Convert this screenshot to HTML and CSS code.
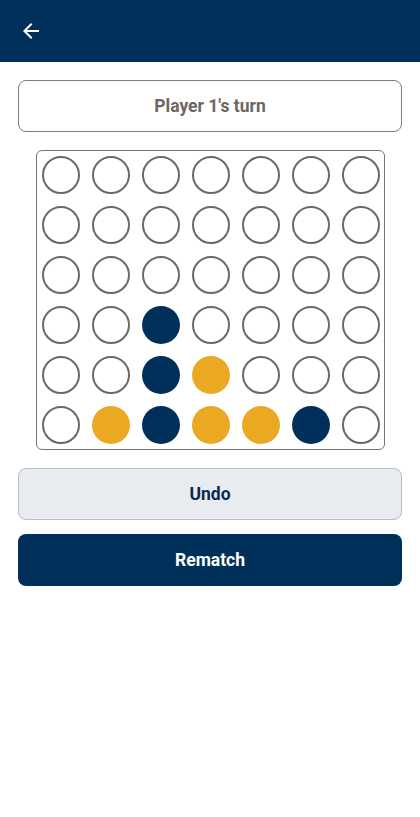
FILE: index.html
```html
<!DOCTYPE html>
<html lang="en">
<head>
<meta charset="UTF-8">
<meta name="viewport" content="width=device-width, initial-scale=1.0">
<title>Connect Four</title>
<link rel="stylesheet" href="styles.css">
</head>
<body>
    <header class="topbar">
        <button class="back" aria-label="Back">
            <svg width="24" height="24" viewBox="0 0 24 24"><path d="M20 11H7.83l5.59-5.59L12 4l-8 8 8 8 1.41-1.41L7.83 13H20v-2z" fill="#fff"/></svg>
        </button>
    </header>

    <main class="game">
        <div class="status">Player 1's turn</div>

        <div class="board">
            <!-- row 1 -->
            <span class="cell"></span><span class="cell"></span><span class="cell"></span><span class="cell"></span><span class="cell"></span><span class="cell"></span><span class="cell"></span>
            <!-- row 2 -->
            <span class="cell"></span><span class="cell"></span><span class="cell"></span><span class="cell"></span><span class="cell"></span><span class="cell"></span><span class="cell"></span>
            <!-- row 3 -->
            <span class="cell"></span><span class="cell"></span><span class="cell"></span><span class="cell"></span><span class="cell"></span><span class="cell"></span><span class="cell"></span>
            <!-- row 4 -->
            <span class="cell"></span><span class="cell"></span><span class="cell p2"></span><span class="cell"></span><span class="cell"></span><span class="cell"></span><span class="cell"></span>
            <!-- row 5 -->
            <span class="cell"></span><span class="cell"></span><span class="cell p2"></span><span class="cell p1"></span><span class="cell"></span><span class="cell"></span><span class="cell"></span>
            <!-- row 6 -->
            <span class="cell"></span><span class="cell p1"></span><span class="cell p2"></span><span class="cell p1"></span><span class="cell p1"></span><span class="cell p2"></span><span class="cell"></span>
        </div>

        <button class="btn undo">Undo</button>
        <button class="btn rematch">Rematch</button>
    </main>
</body>
</html>
```

FILE: styles.css
```css
* {
    margin: 0;
    padding: 0;
    box-sizing: border-box;
    font-family: 'Roboto', sans-serif;
}

body {
    background-color: #ffffff;
}

.topbar {
    height: 62px;
    background-color: #00305a;
    display: flex;
    align-items: center;
    padding-left: 19px;
}

.back {
    background: none;
    border: none;
    display: flex;
    cursor: pointer;
}

.game {
    padding: 18px 18px 0 18px;
    display: flex;
    flex-direction: column;
    align-items: center;
}

.status {
    width: 100%;
    height: 52px;
    border: 1px solid #837b77;
    border-radius: 8px;
    display: flex;
    align-items: center;
    justify-content: center;
    font-size: 17.5px;
    font-weight: 700;
    color: #6e6661;
}

/* the board */
.board {
    margin-top: 18px;
    display: grid;
    grid-template-columns: repeat(7, 38px);
    grid-auto-rows: 38px;
    gap: 12px;
    padding: 5px 4px 5px 5px;
    border: 1px solid #7b7370;
    border-radius: 6px;
}

.cell {
    border: 2px solid #6f6762;
    border-radius: 50%;
    background-color: #fff;
}

.cell.p1 {
    background-color: #eba923;
    border: none;
}

.cell.p2 {
    background-color: #00305a;
    border: none;
}

.btn {
    width: 100%;
    height: 52px;
    border-radius: 8px;
    font-size: 17.5px;
    font-weight: 700;
    cursor: pointer;
}

.undo {
    margin-top: 18px;
    background-color: #e8ebf0;
    border: 1px solid #b9bdc3;
    color: #0b2a4c;
}

.rematch {
    margin-top: 14px;
    background-color: #00305a;
    border: none;
    color: #ffffff;
}
```
